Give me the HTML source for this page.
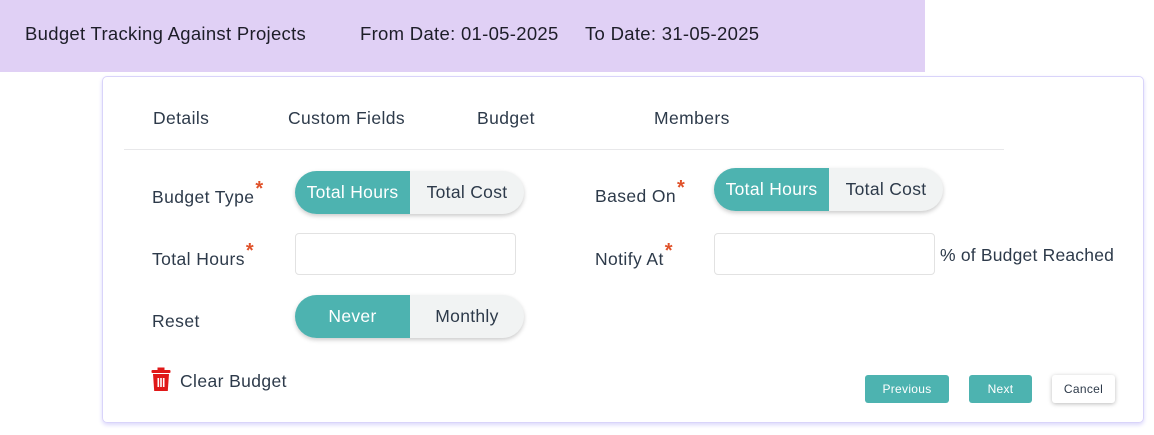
<!DOCTYPE html>
<html><head><style>
*{box-sizing:border-box;margin:0;padding:0}
body{width:1154px;height:435px;background:#fff;font-family:"Liberation Sans",sans-serif;position:relative;overflow:hidden;color:#2d3a4a}
.banner{position:absolute;left:0;top:0;width:925px;height:72px;background:#e0d0f5;color:#1d1d28;font-size:18.5px;letter-spacing:.3px}
.banner span{position:absolute;top:23px}
.card{position:absolute;left:102px;top:76px;width:1042px;height:347px;border:1.5px solid #d9d4fa;border-radius:5px;box-shadow:0 2px 4px #dcd8fb}
.t{position:absolute;font-size:17.5px;letter-spacing:.4px;color:#2d3a4a;white-space:nowrap}
.hr{position:absolute;left:124px;top:149px;width:880px;height:1px;background:#e8e8ea}
.tog{position:absolute;width:229px;height:43px;border-radius:22px;background:#f1f3f3;box-shadow:0 2px 4px #ccc;overflow:hidden;font-size:17.5px;letter-spacing:.3px}
.tog .a{position:absolute;left:0;top:0;width:115px;height:100%;background:#4db3b0;color:#fff;text-align:center;line-height:43px}
.tog .b{position:absolute;left:115px;top:0;right:0;height:100%;text-align:center;line-height:43px;color:#2d3a4a}
.inp{position:absolute;width:221px;height:42px;border:1px solid #e2e2e2;border-radius:4px}
.req{color:#e0522a;font-size:20px;font-weight:bold;position:relative;top:-8px;margin-left:1px}
.btn{position:absolute;height:28px;border-radius:3px;font-size:12px;text-align:center;line-height:29px;letter-spacing:.3px}
</style></head><body>
<div class="banner">
<span style="left:25px">Budget Tracking Against Projects</span>
<span style="left:360px">From Date: 01-05-2025</span>
<span style="left:585px">To Date: 31-05-2025</span>
</div>
<div class="card"></div>
<div class="t" style="left:153px;top:108px">Details</div>
<div class="t" style="left:288px;top:108px">Custom Fields</div>
<div class="t" style="left:477px;top:108px">Budget</div>
<div class="t" style="left:654px;top:108px">Members</div>
<div class="hr"></div>

<div class="t" style="left:152px;top:186px">Budget Type<span class="req">*</span></div>
<div class="tog" style="left:295px;top:171px"><div class="a">Total Hours</div><div class="b">Total Cost</div></div>
<div class="t" style="left:152px;top:248px">Total Hours<span class="req">*</span></div>
<div class="inp" style="left:295px;top:233px"></div>
<div class="t" style="left:152px;top:311px">Reset</div>
<div class="tog" style="left:295px;top:295px"><div class="a">Never</div><div class="b">Monthly</div></div>

<div class="t" style="left:595px;top:185px">Based On<span class="req">*</span></div>
<div class="tog" style="left:714px;top:168px"><div class="a">Total Hours</div><div class="b">Total Cost</div></div>
<div class="t" style="left:595px;top:248px">Notify At<span class="req">*</span></div>
<div class="inp" style="left:714px;top:233px"></div>
<div class="t" style="left:940px;top:245px;letter-spacing:.2px">% of Budget Reached</div>

<svg style="position:absolute;left:151px;top:367px" width="20" height="25" viewBox="0 0 20 25"><rect x="6.5" y="0.5" width="7" height="3" fill="#e01818"/><rect x="0.5" y="3" width="19" height="3" rx="1" fill="#e01818"/><path d="M2 7h16l-1.2 17H3.2z" fill="#e01818"/><rect x="6.5" y="11" width="1.6" height="9" fill="#fff"/><rect x="9.2" y="11" width="1.6" height="9" fill="#fff"/><rect x="11.9" y="11" width="1.6" height="9" fill="#fff"/></svg>
<div class="t" style="left:180px;top:371px">Clear Budget</div>

<div class="btn" style="left:865px;top:375px;width:84px;background:#4db3b0;color:#fff">Previous</div>
<div class="btn" style="left:969px;top:375px;width:63px;background:#4db3b0;color:#fff">Next</div>
<div class="btn" style="left:1052px;top:375px;width:63px;background:#fff;color:#2d3a4a;box-shadow:0 1px 4px #bbb">Cancel</div>
</body></html>
